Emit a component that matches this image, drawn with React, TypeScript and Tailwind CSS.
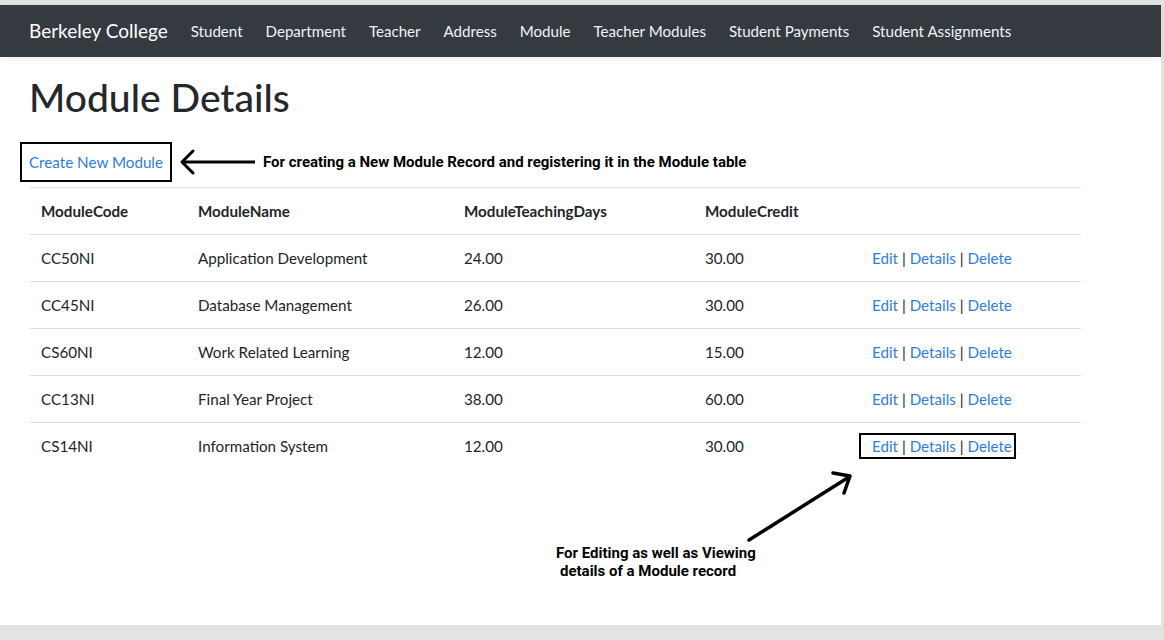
const navLinks = [
  "Student",
  "Department",
  "Teacher",
  "Address",
  "Module",
  "Teacher Modules",
  "Student Payments",
  "Student Assignments",
];

const modules = [
  { code: "CC50NI", name: "Application Development", days: "24.00", credit: "30.00" },
  { code: "CC45NI", name: "Database Management", days: "26.00", credit: "30.00" },
  { code: "CS60NI", name: "Work Related Learning", days: "12.00", credit: "15.00" },
  { code: "CC13NI", name: "Final Year Project", days: "38.00", credit: "60.00" },
  { code: "CS14NI", name: "Information System", days: "12.00", credit: "30.00" },
];

function Actions() {
  return (
    <>
      <a className="text-[#2f7ed8]">Edit</a> |{" "}
      <a className="text-[#2f7ed8]">Details</a> |{" "}
      <a className="text-[#2f7ed8]">Delete</a>
    </>
  );
}

export default function App() {
  return (
    <div className="h-[640px] bg-[#e3e3e3] pt-[5px] pr-[3px] font-['Lato','Liberation_Sans',sans-serif] text-[#212529]">
      <div className="relative h-[620px] bg-white">
        <nav className="flex h-[52px] items-center bg-[#343a40] px-[29px] shadow-[0_2px_8px_rgba(0,0,0,0.08)]">
          <span className="mr-[23px] text-[19px] text-white">Berkeley College</span>
          <div className="flex gap-[23px]">
            {navLinks.map((l) => (
              <span key={l} className="text-[15.1px] text-[#f2f2f2]">
                {l}
              </span>
            ))}
          </div>
        </nav>

        <main className="px-[29px]">
          <h1 className="mt-4 text-[39px] font-medium leading-[48px] text-[#24282c]">
            Module Details
          </h1>

          <div className="mt-[21px] flex items-center">
            <div className="-ml-[9px] flex h-[40px] items-center border-2 border-black pl-[7px] pr-[7px]">
              <a className="text-[15.2px] text-[#2f7ed8]">Create New Module</a>
            </div>
            <svg width="78" height="30" viewBox="0 0 78 30" className="ml-[7px]">
              <path d="M76 15 H4" stroke="black" strokeWidth="3" fill="none" />
              <path d="M14 4 L3 15 L14 26" stroke="black" strokeWidth="3" fill="none" strokeLinecap="round" strokeLinejoin="round" />
            </svg>
            <span className="ml-[6px] font-['Roboto',sans-serif] text-[15px] font-bold text-black">
              For creating a New Module Record and registering it in the Module table
            </span>
          </div>

          <table className="mt-[5px] w-[1052px] table-fixed border-collapse text-left text-[15.2px]">
            <colgroup>
              <col className="w-[157px]" />
              <col className="w-[266px]" />
              <col className="w-[241px]" />
              <col className="w-[167px]" />
              <col className="w-[221px]" />
            </colgroup>
            <thead>
              <tr className="border-t border-[#dee2e6]">
                <th className="px-3 py-3 font-bold leading-[22px]">ModuleCode</th>
                <th className="px-3 py-3 font-bold leading-[22px]">ModuleName</th>
                <th className="px-3 py-3 font-bold leading-[22px]">ModuleTeachingDays</th>
                <th className="px-3 py-3 font-bold leading-[22px]">ModuleCredit</th>
                <th className="px-3 py-3 leading-[22px]"></th>
              </tr>
            </thead>
            <tbody>
              {modules.map((m, i) => (
                <tr key={m.code} className="border-t border-[#dee2e6]">
                  <td className="px-3 py-3 leading-[22px]">{m.code}</td>
                  <td className="px-3 py-3 leading-[22px]">{m.name}</td>
                  <td className="px-3 py-3 leading-[22px]">{m.days}</td>
                  <td className="px-3 py-3 leading-[22px]">{m.credit}</td>
                  <td className="px-3 py-3 leading-[22px]">
                    <span className="relative">
                      <Actions />
                      {i === modules.length - 1 && (
                        <span className="absolute -left-[13px] -right-[4px] -top-[4px] -bottom-[4px] border-2 border-black"></span>
                      )}
                    </span>
                  </td>
                </tr>
              ))}
            </tbody>
          </table>
        </main>

        {/* annotation arrow for row actions */}
        <svg width="120" height="80" viewBox="0 0 120 80" className="absolute left-[740px] top-[460px]">
          <path d="M9 75 L109 12" stroke="black" strokeWidth="3.5" fill="none" strokeLinecap="round" />
          <path d="M93 8 L110 11 L104 28" stroke="black" strokeWidth="3.5" fill="none" strokeLinecap="round" strokeLinejoin="round" />
        </svg>
        <div className="absolute left-[556px] top-[539px] font-['Roboto',sans-serif] text-[15px] font-bold leading-[18px] text-black">
          <div>For Editing as well as Viewing</div>
          <div className="pl-[4px]">details of a Module record</div>
        </div>
      </div>
    </div>
  );
}
